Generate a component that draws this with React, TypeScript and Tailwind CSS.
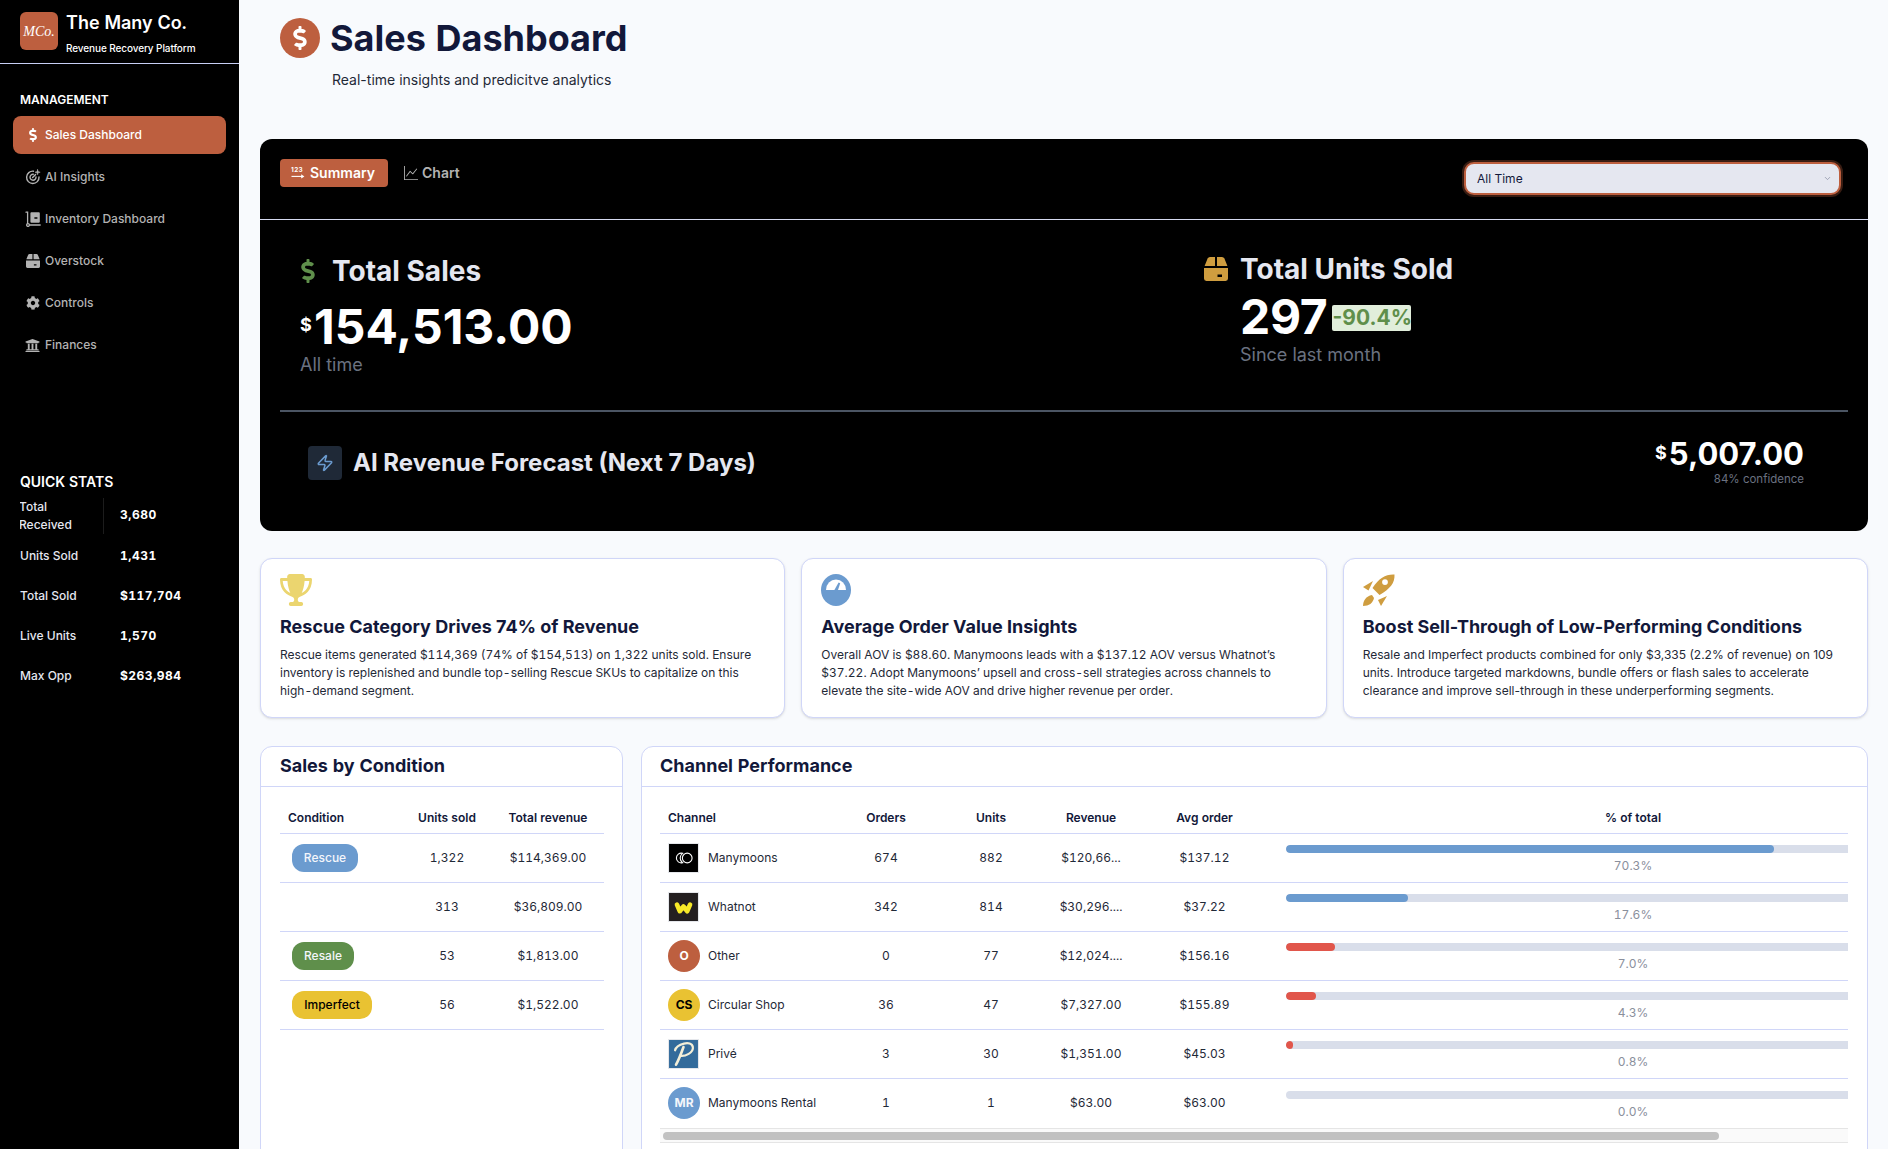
import React from "react";
import { FaDollarSign, FaCog, FaUniversity } from "react-icons/fa";
import { FaTrophy } from "react-icons/fa6";
import { LuChevronDown, LuZap } from "react-icons/lu";
import { BsGraphUp } from "react-icons/bs";

const BoxIcon = ({ className }: { className?: string }) => (
  <svg viewBox="0 0 24 24" className={className} fill="currentColor">
    <path d="M6 0H11v9H0.6L3.6 1.6A2.6 2.6 0 0 1 6 0Z" />
    <path d="M13 0h5a2.6 2.6 0 0 1 2.4 1.6L23.4 9H13Z" />
    <path fillRule="evenodd" d="M0 11h24V21.6A2.4 2.4 0 0 1 21.6 24H2.4A2.4 2.4 0 0 1 0 21.6ZM13.5 17.5v2.4h4.5v-2.4Z" />
  </svg>
);

const InsightIcon = ({ className }: { className?: string }) => (
  <svg viewBox="0 0 16 16" className={className} fill="none" stroke="currentColor" strokeWidth="1.4" strokeLinecap="round">
    <path d="M8.5 2.2A6.2 6.2 0 1 0 14 8" />
    <path d="M8.3 5.2A3 3 0 1 0 11 8" />
    <path d="M7.6 8.4 10.6 5.4" />
    <path d="M12.6 0.6 13.2 2.6 15.2 3.2 13.2 3.8 12.6 5.8 12 3.8 10 3.2 12 2.6Z" fill="currentColor" strokeWidth="0.5" />
  </svg>
);

const DollyIcon = ({ className }: { className?: string }) => (
  <svg viewBox="0 0 16 16" className={className} fill="none" stroke="currentColor" strokeWidth="1.3" strokeLinecap="round">
    <path d="M1 1.2h1.6v11.2" />
    <circle cx="3" cy="14" r="1.4" />
    <path d="M4.6 14h10.6" />
    <path fillRule="evenodd" fill="currentColor" stroke="none" d="M5.4 2.2a1 1 0 0 1 1-1h7.4a1 1 0 0 1 1 1v8.6a1 1 0 0 1-1 1H6.4a1 1 0 0 1-1-1ZM9.4 6.2v1.6h3V6.2Z" />
  </svg>
);

const SummaryIcon = ({ className }: { className?: string }) => (
  <svg viewBox="0 0 14 14" className={className} fill="currentColor">
    <text x="0" y="5.6" fontSize="6.4" fontWeight="700" fontFamily="Inter, sans-serif" letterSpacing="0.4">123</text>
    <path d="M0.5 10.4h11" stroke="currentColor" strokeWidth="1.1" fill="none" />
    <path d="M10.2 8.2 13.4 10.4 10.2 12.6Z" />
  </svg>
);

const GaugeIcon = ({ className }: { className?: string }) => (
  <svg viewBox="0 0 30 32" className={className}>
    <ellipse cx="15" cy="16" rx="15" ry="16" fill="#6b9bcf" />
    <path d="M5 16a10 10.5 0 0 1 20 0Z" fill="#fff" />
    <path d="M13.4 16 17.6 8.6 19.2 9.2 17 16Z" fill="#6b9bcf" />
  </svg>
);

const RocketIcon = ({ className }: { className?: string }) => (
  <svg viewBox="0 0 32 32" className={className} fill="currentColor">
    <path fillRule="evenodd" d="M31.5 0.5C23 0 16 4 9.5 14L16.5 21C27 15 32 9 31.5 0.5ZM22 5.2a2.9 2.9 0 1 0 0 5.8 2.9 2.9 0 0 0 0-5.8Z" />
    <path d="M10 7 0 13 5.5 16.5Z" />
    <path d="M24 22 18 32 15 26Z" />
    <path d="M9 21C3 22 0 27 0 32 6 32 10 29 11 24Z" />
  </svg>
);

const nav = [
  { label: "Sales Dashboard", icon: <FaDollarSign className="w-[14px] h-[14px] ml-[1px]" />, active: true },
  { label: "AI Insights", icon: <InsightIcon className="w-[16px] h-[16px]" /> },
  { label: "Inventory Dashboard", icon: <DollyIcon className="w-[16px] h-[16px]" /> },
  { label: "Overstock", icon: <BoxIcon className="w-[14px] h-[14px] ml-[1px]" /> },
  { label: "Controls", icon: <FaCog className="w-[14px] h-[14px] ml-[1px]" /> },
  { label: "Finances", icon: <FaUniversity className="w-[15px] h-[15px]" /> },
];

const stats = [
  ["Units Sold", "1,431"],
  ["Total Sold", "$117,704"],
  ["Live Units", "1,570"],
  ["Max Opp", "$263,984"],
];

const insights = [
  {
    icon: <FaTrophy preserveAspectRatio="none" className="w-[32px] h-[32px] text-[#ebd56f]" />,
    title: "Rescue Category Drives 74% of Revenue",
    body: "Rescue items generated $114,369 (74% of $154,513) on 1,322 units sold. Ensure inventory is replenished and bundle top-selling Rescue SKUs to capitalize on this high-demand segment.",
    cls: "",
  },
  {
    icon: <GaugeIcon className="w-[30px] h-[32px]" />,
    title: "Average Order Value Insights",
    body: "Overall AOV is $88.60. Manymoons leads with a $137.12 AOV versus Whatnot’s $37.22. Adopt Manymoons’ upsell and cross-sell strategies across channels to elevate the site-wide AOV and drive higher revenue per order.",
    cls: "",
  },
  {
    icon: <RocketIcon className="w-[32px] h-[32px] text-[#cf9d3f]" />,
    title: "Boost Sell-Through of Low-Performing Conditions",
    body: "Resale and Imperfect products combined for only $3,335 (2.2% of revenue) on 109 units. Introduce targeted markdowns, bundle offers or flash sales to accelerate clearance and improve sell-through in these underperforming segments.",
    cls: "normal-nums",
  },
];

const conditions = [
  { name: "Rescue", cls: "bg-[#6b9bcf] text-[#f4f6fb] w-[66px]", units: "1,322", revenue: "$114,369.00" },
  { name: "", cls: "", units: "313", revenue: "$36,809.00" },
  { name: "Resale", cls: "bg-[#5f8f4b] text-[#f4f6fb] w-[62px]", units: "53", revenue: "$1,813.00" },
  { name: "Imperfect", cls: "bg-[#e9c232] text-black w-[80px]", units: "56", revenue: "$1,522.00" },
];

const ManymoonsLogo = () => (
  <svg viewBox="0 0 31 30" className="w-[31px] h-[30px] border border-[#e5e7eb]">
    <rect width="31" height="30" fill="#000" />
    <circle cx="19.5" cy="15" r="5.2" fill="none" stroke="#fff" strokeWidth="1.2" />
    <path d="M14.5 10a5.2 5.2 0 1 0 0 10c-3.4-2.4-3.4-7.6 0-10Z" fill="none" stroke="#fff" strokeWidth="1.2" />
  </svg>
);
const WhatnotLogo = () => (
  <svg viewBox="0 0 31 30" className="w-[31px] h-[30px] border border-[#e5e7eb]">
    <rect width="31" height="30" fill="#231f20" />
    <path d="M8.5 12.5 11.5 19.5 15.5 14.5 19.5 19.5 22.5 12.5" fill="none" stroke="#f7e928" strokeWidth="5" strokeLinecap="round" strokeLinejoin="round" />
  </svg>
);
const PriveLogo = () => (
  <svg viewBox="0 0 31 30" className="w-[31px] h-[30px] border border-[#e5e7eb]">
    <rect width="31" height="30" fill="#336b9b" />
    <path d="M6.5 11C8 4.5 24-0.5 25.5 7.5 26.5 14 17 17.5 12.5 17" fill="none" stroke="#f4efd8" strokeWidth="2.4" strokeLinecap="round" />
    <path d="M15.5 7.5C13.5 13 10.5 21 7.5 26.5" fill="none" stroke="#f4efd8" strokeWidth="2.8" strokeLinecap="round" />
  </svg>
);
const Circle = ({ text, cls }: { text: string; cls: string }) => (
  <div className={`w-[32px] h-[32px] rounded-full flex items-center justify-center text-[12px] font-bold ${cls}`}>{text}</div>
);

const channels = [
  { name: "Manymoons", logo: <ManymoonsLogo />, orders: "674", units: "882", revenue: "$120,66...", avg: "$137.12", pct: 70.3, label: "70.3%", color: "bg-[#6b9bcf]" },
  { name: "Whatnot", logo: <WhatnotLogo />, orders: "342", units: "814", revenue: "$30,296....", avg: "$37.22", pct: 17.6, label: "17.6%", color: "bg-[#6b9bcf]" },
  { name: "Other", logo: <Circle text="O" cls="bg-[#bd5f3f] text-white" />, orders: "0", units: "77", revenue: "$12,024....", avg: "$156.16", pct: 7.0, label: "7.0%", color: "bg-[#e1564b]" },
  { name: "Circular Shop", logo: <Circle text="CS" cls="bg-[#e9c232] text-black" />, orders: "36", units: "47", revenue: "$7,327.00", avg: "$155.89", pct: 4.3, label: "4.3%", color: "bg-[#e1564b]" },
  { name: "Privé", logo: <PriveLogo />, orders: "3", units: "30", revenue: "$1,351.00", avg: "$45.03", pct: 0.8, label: "0.8%", color: "bg-[#e1564b]" },
  { name: "Manymoons Rental", logo: <Circle text="MR" cls="bg-[#6b9bcf] text-[#f4f6fb]" />, orders: "1", units: "1", revenue: "$63.00", avg: "$63.00", pct: 0, label: "0.0%", color: "bg-[#e1564b]" },
];

export default function App() {
  return (
    <div className="flex h-[1149px] w-full overflow-hidden bg-[#f8fafd] font-['Inter',sans-serif] tabular-nums text-[#12183a]">
      <aside className="w-[239px] shrink-0 bg-black text-white">
        <div className="h-[64px] border-b border-[#c7cff5] pl-[20px] pt-[12px] flex gap-[8px]">
          <div className="w-[38px] h-[38px] rounded-[6px] bg-[#bd5f3f] flex items-center justify-center font-['Liberation_Serif',serif] italic text-[14px]">MCo.</div>
          <div>
            <div className="text-[18px] font-semibold leading-[22px]">The Many Co.</div>
            <div className="text-[10px] font-medium leading-[14px] mt-[7px] tracking-[-0.1px]">Revenue Recovery Platform</div>
          </div>
        </div>
        <div className="pl-[20px] pt-[28px] text-[12px] font-semibold leading-[16px]">MANAGEMENT</div>
        <nav className="mt-[8px] px-[13px]">
          {nav.map((n) => (
            <div key={n.label} className={`h-[38px] mb-[4px] rounded-[8px] flex items-center pl-[12px] text-[12px] font-medium ${n.active ? "bg-[#bd5f3f] text-white" : "text-[#b3b3b3]"}`}>
              <span className="w-[20px] flex justify-start">{n.icon}</span>
              {n.label}
            </div>
          ))}
        </nav>
        <div className="pl-[20px] mt-[108px] text-[14px] font-semibold leading-[20px]">QUICK STATS</div>
        <div className="mt-[8px] pl-[20px] text-[12px] font-medium text-[#e5e7f0]">
          <div className="h-[32px] flex items-center mt-[3px]">
            <div className="w-[84px] h-[36px] border-r border-[#1c1c1c] leading-[18px] overflow-hidden"><div className="-ml-[1px]">Total<br />Received</div></div>
            <div className="pl-[16px] -mt-[3px] font-bold tracking-[0.5px] text-white">3,680</div>
          </div>
          <div className="mt-[4px]">
            {stats.map(([k, v]) => (
              <div key={k} className="h-[40px] flex items-center">
                <div className="w-[100px]">{k}</div>
                <div className="font-bold tracking-[0.5px] text-white">{v}</div>
              </div>
            ))}
          </div>
        </div>
      </aside>

      <main className="flex-1 min-w-0 pl-[21px] pr-[20px]">
        <header className="h-[139px] pt-[18px] pl-[20px]">
          <div className="flex items-center gap-[10px]">
            <div className="w-[40px] h-[40px] rounded-full bg-[#bd5f3f] flex items-center justify-center text-white">
              <FaDollarSign className="w-[24px] h-[24px]" />
            </div>
            <h1 className="text-[36px] font-bold leading-[40px]">Sales Dashboard</h1>
          </div>
          <p className="mt-[12px] ml-[52px] text-[14px] leading-[20px] text-[#1f2937] normal-nums">Real-time insights and predicitve analytics</p>
        </header>

        <section className="h-[392px] rounded-[12px] bg-black text-white normal-nums">
          <div className="h-[81px] border-b border-[#d5daf0] pt-[19px] pl-[20px] pr-[27px] flex justify-between items-start">
            <div className="flex items-center gap-[16px] text-[14px] font-semibold">
              <div className="h-[28px] w-[108px] rounded-[4px] bg-[#bd5f3f] flex items-center pl-[11px] gap-[5px] mt-[1px] pb-[1px]">
                <SummaryIcon className="w-[14px] h-[14px]" />
                Summary
              </div>
              <div className="flex items-center gap-[4px] text-[#b3b3b3]">
                <BsGraphUp className="w-[14px] h-[14px]" />
                Chart
              </div>
            </div>
            <div className="relative w-[377px] mt-[4px]">
              <select className="appearance-none w-full h-[33px] rounded-[10px] border-2 border-[#bd5f3f] ring-2 ring-[#bd5f3f]/30 bg-[#e5e7f0] pl-[11px] text-[12px] text-[#12183a] outline-none">
                <option>All Time</option>
              </select>
              <LuChevronDown className="absolute right-[9px] top-[12px] w-[9px] h-[9px] text-[#8a8fa3]" />
            </div>
          </div>

          <div className="h-[190px] flex">
            <div className="w-[944px] pl-[40px] pt-[36px]">
              <div className="flex items-center">
                <FaDollarSign className="w-[14px] h-[24px] text-[#5f8f4b] ml-[1px]" />
                <div className="ml-[17px] text-[28px] font-bold leading-[30px] text-[#e5e7f0]">Total Sales</div>
              </div>
              <div className="flex items-center mt-[11px]">
                <span className="text-[18px] font-bold mt-[-6px] w-[14px]">$</span>
                <span className="text-[48px] font-bold leading-[60px]">154,513.00</span>
              </div>
              <div className="text-[18px] leading-[22px] -mt-[3px] text-[#6b7280]">All time</div>
            </div>
            <div className="pt-[34px]">
              <div className="flex items-center">
                <BoxIcon className="w-[24px] h-[24px] text-[#cf9d3f]" />
                <div className="ml-[12px] text-[28px] font-bold leading-[30px] text-[#e5e7f0]">Total Units Sold</div>
              </div>
              <div className="flex items-center mt-[3px] ml-[36px]">
                <span className="text-[48px] font-bold leading-[60px] tracking-[-0.3px]">297</span>
                <span className="ml-[5px] mt-[2px] h-[26px] w-[79px] rounded-[2px] bg-[#e1eedb] text-[#5f8f4b] text-[21px] font-bold leading-[26px] text-center">-90.4%</span>
              </div>
              <div className="ml-[36px] text-[18px] leading-[22px] -mt-[3px] text-[#6b7280]">Since last month</div>
            </div>
          </div>

          <div className="mx-[20px] h-[2px] bg-[#4b5563]" />

          <div className="h-[119px] flex justify-between items-start pl-[48px] pr-[64px]">
            <div className="flex items-center gap-[11px] mt-[34px]">
              <div className="w-[34px] h-[34px] rounded-[4px] bg-[#1f2937] flex items-center justify-center">
                <LuZap className="w-[18px] h-[18px] text-[#6b9bcf]" />
              </div>
              <div className="text-[24px] font-bold leading-[30px] text-[#e5e7f0]">AI Revenue Forecast (Next 7 Days)</div>
            </div>
            <div className="mt-[22px] text-right">
              <div className="flex items-center justify-end leading-[40px]">
                <span className="text-[18px] font-bold mr-[2px] -mt-[2px]">$</span>
                <span className="text-[31px] font-bold">5,007.00</span>
              </div>
              <div className="text-[11.5px] leading-[16px] -mt-[3px] text-[#6b7280]">84% confidence</div>
            </div>
          </div>
        </section>

        <section className="mt-[27px] grid grid-cols-3 gap-[16px]">
          {insights.map((c) => (
            <div key={c.title} className="h-[160px] rounded-[12px] border border-[#d0d6f8] bg-white px-[19px] pt-[15px] shadow-sm">
              <div className="h-[32px] flex items-center">{c.icon}</div>
              <h3 className="mt-[9px] text-[18px] font-bold leading-[24px] text-[#12183a] normal-nums">{c.title}</h3>
              <p className={`mt-[7px] text-[12px] leading-[18px] text-[#1f2937] ${c.cls}`}>{c.body}</p>
            </div>
          ))}
        </section>

        <section className="mt-[28px] flex gap-[18px] items-start">
          <div className="w-[363px] shrink-0 h-[500px] rounded-t-[12px] border border-[#d0d6f8] bg-white">
            <h3 className="h-[40px] border-b border-[#d0d6f8] pl-[19px] text-[18px] font-bold leading-[37px]">Sales by Condition</h3>
            <div className="pt-[16px] px-[19px]">
              <table className="w-full table-fixed border-collapse text-[12px]">
                <colgroup><col className="w-[122px]" /><col className="w-[90px]" /><col className="w-[112px]" /></colgroup>
                <thead>
                  <tr className="h-[30px] border-b border-[#d0d6f8] font-semibold">
                    <th className="text-left pl-[8px] font-semibold">Condition</th>
                    <th className="font-semibold">Units sold</th>
                    <th className="font-semibold">Total revenue</th>
                  </tr>
                </thead>
                <tbody>
                  {conditions.map((r) => (
                    <tr key={r.revenue} className="h-[49px] border-b border-[#d0d6f8] text-[#1f2937]">
                      <td className="pl-[12px]">
                        {r.name && <div className={`h-[28px] rounded-[12px] flex items-center justify-center font-medium ${r.cls}`}>{r.name}</div>}
                      </td>
                      <td className="text-center">{r.units}</td>
                      <td className="text-center">{r.revenue}</td>
                    </tr>
                  ))}
                </tbody>
              </table>
            </div>
          </div>

          <div className="flex-1 min-w-0 h-[500px] rounded-t-[12px] border border-[#d0d6f8] bg-white">
            <h3 className="h-[40px] border-b border-[#d0d6f8] pl-[18px] text-[18px] font-bold leading-[37px]">Channel Performance</h3>
            <div className="pt-[16px] pl-[18px] pr-[19px]">
              <div className="overflow-hidden">
                <table className="w-[1328px] table-fixed border-collapse text-[12px]">
                  <colgroup>
                    <col className="w-[181px]" /><col className="w-[90px]" /><col className="w-[120px]" /><col className="w-[80px]" /><col className="w-[147px]" /><col className="w-[710px]" />
                  </colgroup>
                  <thead>
                    <tr className="h-[30px] border-b border-[#d0d6f8]">
                      <th className="text-left pl-[8px] font-semibold">Channel</th>
                      <th className="font-semibold">Orders</th>
                      <th className="font-semibold">Units</th>
                      <th className="font-semibold">Revenue</th>
                      <th className="font-semibold">Avg order</th>
                      <th className="font-semibold">% of total</th>
                    </tr>
                  </thead>
                  <tbody>
                    {channels.map((r) => (
                      <tr key={r.name} className="h-[49px] last:h-[50px] border-b border-[#d0d6f8] last:border-b-0 text-[#1f2937]">
                        <td className="pl-[8px]">
                          <div className="flex items-center gap-[8px]">
                            <div className="w-[32px] shrink-0">{r.logo}</div>
                            <span>{r.name}</span>
                          </div>
                        </td>
                        <td className="text-center">{r.orders}</td>
                        <td className="text-center">{r.units}</td>
                        <td className="text-center">{r.revenue}</td>
                        <td className="text-center">{r.avg}</td>
                        <td className="px-[8px]">
                          <div className="h-[8px] w-full rounded-full bg-[#d9deea] overflow-hidden -mt-[6px]">
                            {r.pct > 0 && <div className={`h-full rounded-full ${r.color}`} style={{ width: `${Math.max(r.pct, 1)}%` }} />}
                          </div>
                          <div className="mt-[5px] text-center text-[#8a8f9c] leading-[16px] -mb-[10px]">{r.label}</div>
                        </td>
                      </tr>
                    ))}
                  </tbody>
                </table>
              </div>
              <div className="h-[15px] border-y border-[#e5e5e5] bg-[#fafafa] flex items-center pl-[3px]">
                <div className="h-[8px] w-[1056px] rounded-full bg-[#c1c1c1]" />
              </div>
            </div>
          </div>
        </section>
      </main>
    </div>
  );
}
